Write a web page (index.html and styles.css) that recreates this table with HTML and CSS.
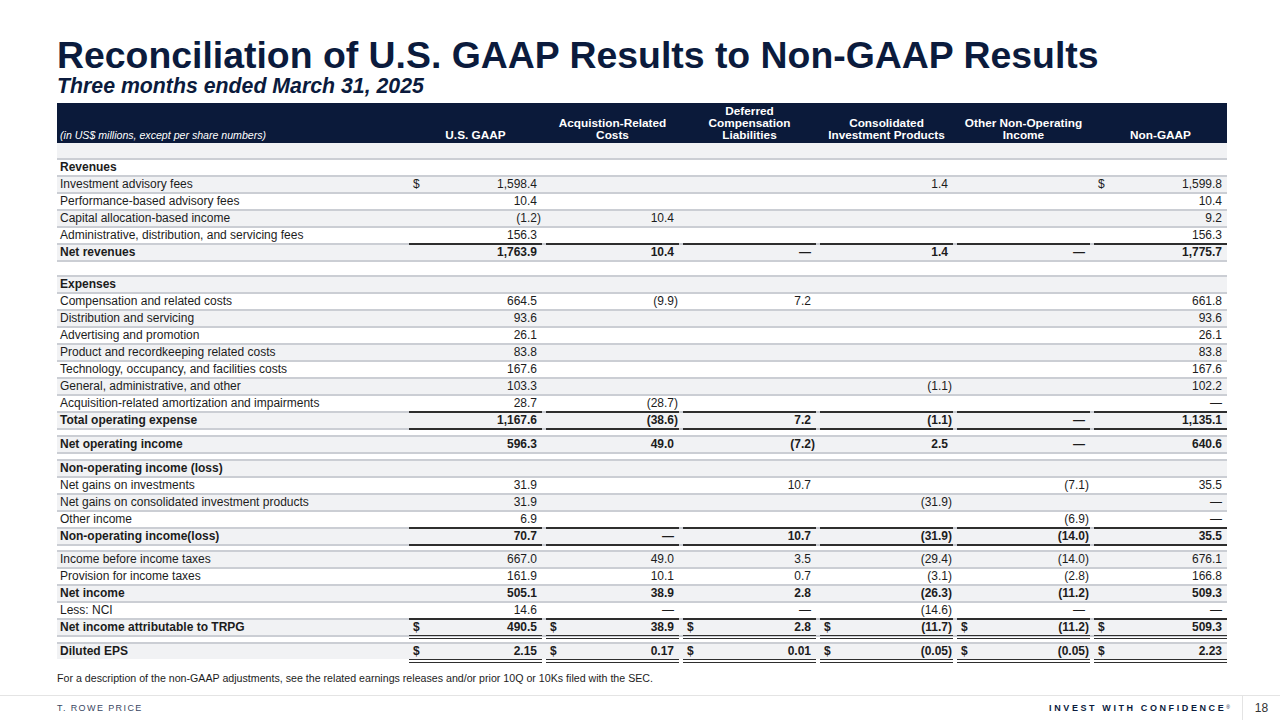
FILE: index.html
```html
<!DOCTYPE html>
<html lang="en">
<head>
<meta charset="utf-8">
<title>Reconciliation of U.S. GAAP Results to Non-GAAP Results</title>
<link rel="stylesheet" href="styles.css">
</head>
<body>
<div class="slide">
  <header class="head">
    <h1 class="title">Reconciliation of U.S. GAAP Results to Non-GAAP Results</h1>
    <h2 class="subtitle">Three months ended March 31, 2025</h2>
  </header>

  <div class="table">
    <div class="thead">
      <div class="th th-label">(in US$ millions, except per share numbers)</div>
      <div class="th">U.S. GAAP</div>
      <div class="th">Acquistion-Related<br>Costs</div>
      <div class="th">Deferred<br>Compensation<br>Liabilities</div>
      <div class="th">Consolidated<br>Investment Products</div>
      <div class="th">Other Non-Operating<br>Income</div>
      <div class="th">Non-GAAP</div>
    </div>

    <div class="row alt blank"></div>

    <div class="row bold"><div class="lbl">Revenues</div><div class="c"></div><div class="c"></div><div class="c"></div><div class="c"></div><div class="c"></div><div class="c"></div></div>
    <div class="row alt"><div class="lbl">Investment advisory fees</div><div class="c"><span class="cur">$</span><span class="n">1,598.4</span></div><div class="c"></div><div class="c"></div><div class="c"><span class="n">1.4</span></div><div class="c"></div><div class="c"><span class="cur">$</span><span class="n">1,599.8</span></div></div>
    <div class="row"><div class="lbl">Performance-based advisory fees</div><div class="c"><span class="n">10.4</span></div><div class="c"></div><div class="c"></div><div class="c"></div><div class="c"></div><div class="c"><span class="n">10.4</span></div></div>
    <div class="row alt"><div class="lbl">Capital allocation-based income</div><div class="c"><span class="n neg">(1.2)</span></div><div class="c"><span class="n">10.4</span></div><div class="c"></div><div class="c"></div><div class="c"></div><div class="c"><span class="n">9.2</span></div></div>
    <div class="row"><div class="lbl">Administrative, distribution, and servicing fees</div><div class="c"><span class="n">156.3</span></div><div class="c"></div><div class="c"></div><div class="c"></div><div class="c"></div><div class="c"><span class="n">156.3</span></div></div>
    <div class="row alt bold rt"><div class="lbl">Net revenues</div><div class="c"><span class="n">1,763.9</span></div><div class="c"><span class="n">10.4</span></div><div class="c"><span class="n">—</span></div><div class="c"><span class="n">1.4</span></div><div class="c"><span class="n">—</span></div><div class="c"><span class="n">1,775.7</span></div></div>

    <div class="row gap gap-lg"></div>

    <div class="row alt bold"><div class="lbl">Expenses</div><div class="c"></div><div class="c"></div><div class="c"></div><div class="c"></div><div class="c"></div><div class="c"></div></div>
    <div class="row"><div class="lbl">Compensation and related costs</div><div class="c"><span class="n">664.5</span></div><div class="c"><span class="n neg">(9.9)</span></div><div class="c"><span class="n">7.2</span></div><div class="c"></div><div class="c"></div><div class="c"><span class="n">661.8</span></div></div>
    <div class="row alt"><div class="lbl">Distribution and servicing</div><div class="c"><span class="n">93.6</span></div><div class="c"></div><div class="c"></div><div class="c"></div><div class="c"></div><div class="c"><span class="n">93.6</span></div></div>
    <div class="row"><div class="lbl">Advertising and promotion</div><div class="c"><span class="n">26.1</span></div><div class="c"></div><div class="c"></div><div class="c"></div><div class="c"></div><div class="c"><span class="n">26.1</span></div></div>
    <div class="row alt"><div class="lbl">Product and recordkeeping related costs</div><div class="c"><span class="n">83.8</span></div><div class="c"></div><div class="c"></div><div class="c"></div><div class="c"></div><div class="c"><span class="n">83.8</span></div></div>
    <div class="row"><div class="lbl">Technology, occupancy, and facilities costs</div><div class="c"><span class="n">167.6</span></div><div class="c"></div><div class="c"></div><div class="c"></div><div class="c"></div><div class="c"><span class="n">167.6</span></div></div>
    <div class="row alt"><div class="lbl">General, administrative, and other</div><div class="c"><span class="n">103.3</span></div><div class="c"></div><div class="c"></div><div class="c"><span class="n neg">(1.1)</span></div><div class="c"></div><div class="c"><span class="n">102.2</span></div></div>
    <div class="row"><div class="lbl">Acquisition-related amortization and impairments</div><div class="c"><span class="n">28.7</span></div><div class="c"><span class="n neg">(28.7)</span></div><div class="c"></div><div class="c"></div><div class="c"></div><div class="c"><span class="n">—</span></div></div>
    <div class="row alt bold rt rb"><div class="lbl">Total operating expense</div><div class="c"><span class="n">1,167.6</span></div><div class="c"><span class="n neg">(38.6)</span></div><div class="c"><span class="n">7.2</span></div><div class="c"><span class="n neg">(1.1)</span></div><div class="c"><span class="n">—</span></div><div class="c"><span class="n">1,135.1</span></div></div>

    <div class="row gap"></div>

    <div class="row alt bold"><div class="lbl">Net operating income</div><div class="c"><span class="n">596.3</span></div><div class="c"><span class="n">49.0</span></div><div class="c"><span class="n neg">(7.2)</span></div><div class="c"><span class="n">2.5</span></div><div class="c"><span class="n">—</span></div><div class="c"><span class="n">640.6</span></div></div>

    <div class="row gap"></div>

    <div class="row alt bold"><div class="lbl">Non-operating income (loss)</div><div class="c"></div><div class="c"></div><div class="c"></div><div class="c"></div><div class="c"></div><div class="c"></div></div>
    <div class="row"><div class="lbl">Net gains on investments</div><div class="c"><span class="n">31.9</span></div><div class="c"></div><div class="c"><span class="n">10.7</span></div><div class="c"></div><div class="c"><span class="n neg">(7.1)</span></div><div class="c"><span class="n">35.5</span></div></div>
    <div class="row alt"><div class="lbl">Net gains on consolidated investment products</div><div class="c"><span class="n">31.9</span></div><div class="c"></div><div class="c"></div><div class="c"><span class="n neg">(31.9)</span></div><div class="c"></div><div class="c"><span class="n">—</span></div></div>
    <div class="row"><div class="lbl">Other income</div><div class="c"><span class="n">6.9</span></div><div class="c"></div><div class="c"></div><div class="c"></div><div class="c"><span class="n neg">(6.9)</span></div><div class="c"><span class="n">—</span></div></div>
    <div class="row alt bold rt rb"><div class="lbl">Non-operating income(loss)</div><div class="c"><span class="n">70.7</span></div><div class="c"><span class="n">—</span></div><div class="c"><span class="n">10.7</span></div><div class="c"><span class="n neg">(31.9)</span></div><div class="c"><span class="n neg">(14.0)</span></div><div class="c"><span class="n">35.5</span></div></div>

    <div class="row gap gap-sm"></div>

    <div class="row alt"><div class="lbl">Income before income taxes</div><div class="c"><span class="n">667.0</span></div><div class="c"><span class="n">49.0</span></div><div class="c"><span class="n">3.5</span></div><div class="c"><span class="n neg">(29.4)</span></div><div class="c"><span class="n neg">(14.0)</span></div><div class="c"><span class="n">676.1</span></div></div>
    <div class="row"><div class="lbl">Provision for income taxes</div><div class="c"><span class="n">161.9</span></div><div class="c"><span class="n">10.1</span></div><div class="c"><span class="n">0.7</span></div><div class="c"><span class="n neg">(3.1)</span></div><div class="c"><span class="n neg">(2.8)</span></div><div class="c"><span class="n">166.8</span></div></div>
    <div class="row alt bold"><div class="lbl">Net income</div><div class="c"><span class="n">505.1</span></div><div class="c"><span class="n">38.9</span></div><div class="c"><span class="n">2.8</span></div><div class="c"><span class="n neg">(26.3)</span></div><div class="c"><span class="n neg">(11.2)</span></div><div class="c"><span class="n">509.3</span></div></div>
    <div class="row"><div class="lbl">Less: NCI</div><div class="c"><span class="n">14.6</span></div><div class="c"><span class="n">—</span></div><div class="c"><span class="n">—</span></div><div class="c"><span class="n neg">(14.6)</span></div><div class="c"><span class="n">—</span></div><div class="c"><span class="n">—</span></div></div>
    <div class="row alt bold rt rd"><div class="lbl">Net income attributable to TRPG</div><div class="c"><span class="cur">$</span><span class="n">490.5</span></div><div class="c"><span class="cur">$</span><span class="n">38.9</span></div><div class="c"><span class="cur">$</span><span class="n">2.8</span></div><div class="c"><span class="cur">$</span><span class="n neg">(11.7)</span></div><div class="c"><span class="cur">$</span><span class="n neg">(11.2)</span></div><div class="c"><span class="cur">$</span><span class="n">509.3</span></div></div>

    <div class="row gap"></div>

    <div class="row alt bold rd"><div class="lbl">Diluted EPS</div><div class="c"><span class="cur">$</span><span class="n">2.15</span></div><div class="c"><span class="cur">$</span><span class="n">0.17</span></div><div class="c"><span class="cur">$</span><span class="n">0.01</span></div><div class="c"><span class="cur">$</span><span class="n neg">(0.05)</span></div><div class="c"><span class="cur">$</span><span class="n neg">(0.05)</span></div><div class="c"><span class="cur">$</span><span class="n">2.23</span></div></div>
  </div>

  <p class="note">For a description of the non-GAAP adjustments, see the related earnings releases and/or prior 10Q or 10Ks filed with the SEC.</p>

  <footer class="foot">
    <div class="brand">T. ROWE PRICE</div>
    <div class="foot-right">
      <div class="tagline">INVEST WITH CONFIDENCE<sup class="reg">®</sup></div>
      <div class="page">18</div>
    </div>
  </footer>
</div>
</body>
</html>
```

FILE: styles.css
```css
* { box-sizing: border-box; }

html, body {
  margin: 0;
  padding: 0;
  background: #ffffff;
}

body {
  font-family: "Liberation Sans", Arial, sans-serif;
  color: #1c1c1c;
}

.slide {
  width: 1280px;
  height: 720px;
  display: flex;
  flex-direction: column;
  overflow: hidden;
}

.head {
  padding: 36px 0 0 57px;
}

.title {
  margin: 0;
  font-size: 37.4px;
  line-height: 38px;
  font-weight: 700;
  color: #0b1b3d;
  letter-spacing: 0;
}

.subtitle {
  margin: 2px 0 0 0;
  font-size: 21.3px;
  line-height: 21px;
  font-weight: 700;
  font-style: italic;
  color: #0b1b3d;
}

.table {
  margin: 6px 0 0 57px;
  width: 1170px;
  font-size: 12px;
}

.thead,
.row {
  display: grid;
  grid-template-columns: 348px repeat(6, 133px);
  column-gap: 4px;
}

.thead {
  height: 40px;
  background: #0b1a3a;
  color: #ffffff;
  align-items: end;
  padding-bottom: 2px;
}

.th {
  font-weight: 700;
  font-size: 11.8px;
  line-height: 12px;
  text-align: center;
}

.th-label {
  text-align: left;
  padding-left: 3px;
  font-weight: 400;
  font-style: italic;
  font-size: 10.6px;
}

.row {
  height: 17px;
  grid-template-rows: 1fr;
  border-top: 2px solid #cbced4;
  background: #ffffff;
  line-height: 15px;
}

.row.alt { background: #f1f2f4; }

.row.blank { height: 15px; border-top: 0; }
.row.gap { height: 7px; }
.row.gap-lg { height: 15px; }
.row.gap-sm { height: 6px; }

.bold { font-weight: 700; }

.lbl {
  padding-left: 3px;
  white-space: nowrap;
}

.c {
  display: flex;
  align-items: center;
  padding: 0 5px 0 4px;
  white-space: nowrap;
}

.c .n { margin-left: auto; }
.c .n.neg { margin-right: -4px; }

.rt .c {
  border-top: 2px solid #2e2e2e;
  margin-top: -2px;
}

.rb .c {
  border-bottom: 2px solid #2e2e2e;
  margin-bottom: -2px;
}

.rd .c {
  border-bottom: 4px double #2e2e2e;
  margin-bottom: -2px;
}

.note {
  margin: 12px 0 0 57px;
  font-size: 10.65px;
  line-height: 14px;
  color: #1c1c1c;
}

.foot {
  margin-top: auto;
  height: 25px;
  border-top: 1px solid #e4e4e4;
  display: flex;
  align-items: stretch;
  justify-content: space-between;
}

.brand {
  padding-left: 57px;
  display: flex;
  align-items: center;
  font-size: 9px;
  letter-spacing: 1.4px;
  color: #3a4763;
}

.foot-right {
  display: flex;
  align-items: stretch;
}

.tagline {
  display: flex;
  align-items: center;
  font-size: 9px;
  font-weight: 700;
  letter-spacing: 2.6px;
  color: #0b1b3d;
  padding-right: 12px;
}

.reg {
  font-size: 5px;
  letter-spacing: 0;
  align-self: flex-start;
  margin-top: 8px;
  font-weight: 400;
}

.page {
  width: 38px;
  border-left: 1px solid #e4e4e4;
  display: flex;
  align-items: center;
  justify-content: center;
  font-size: 12px;
  color: #333333;
}
```
